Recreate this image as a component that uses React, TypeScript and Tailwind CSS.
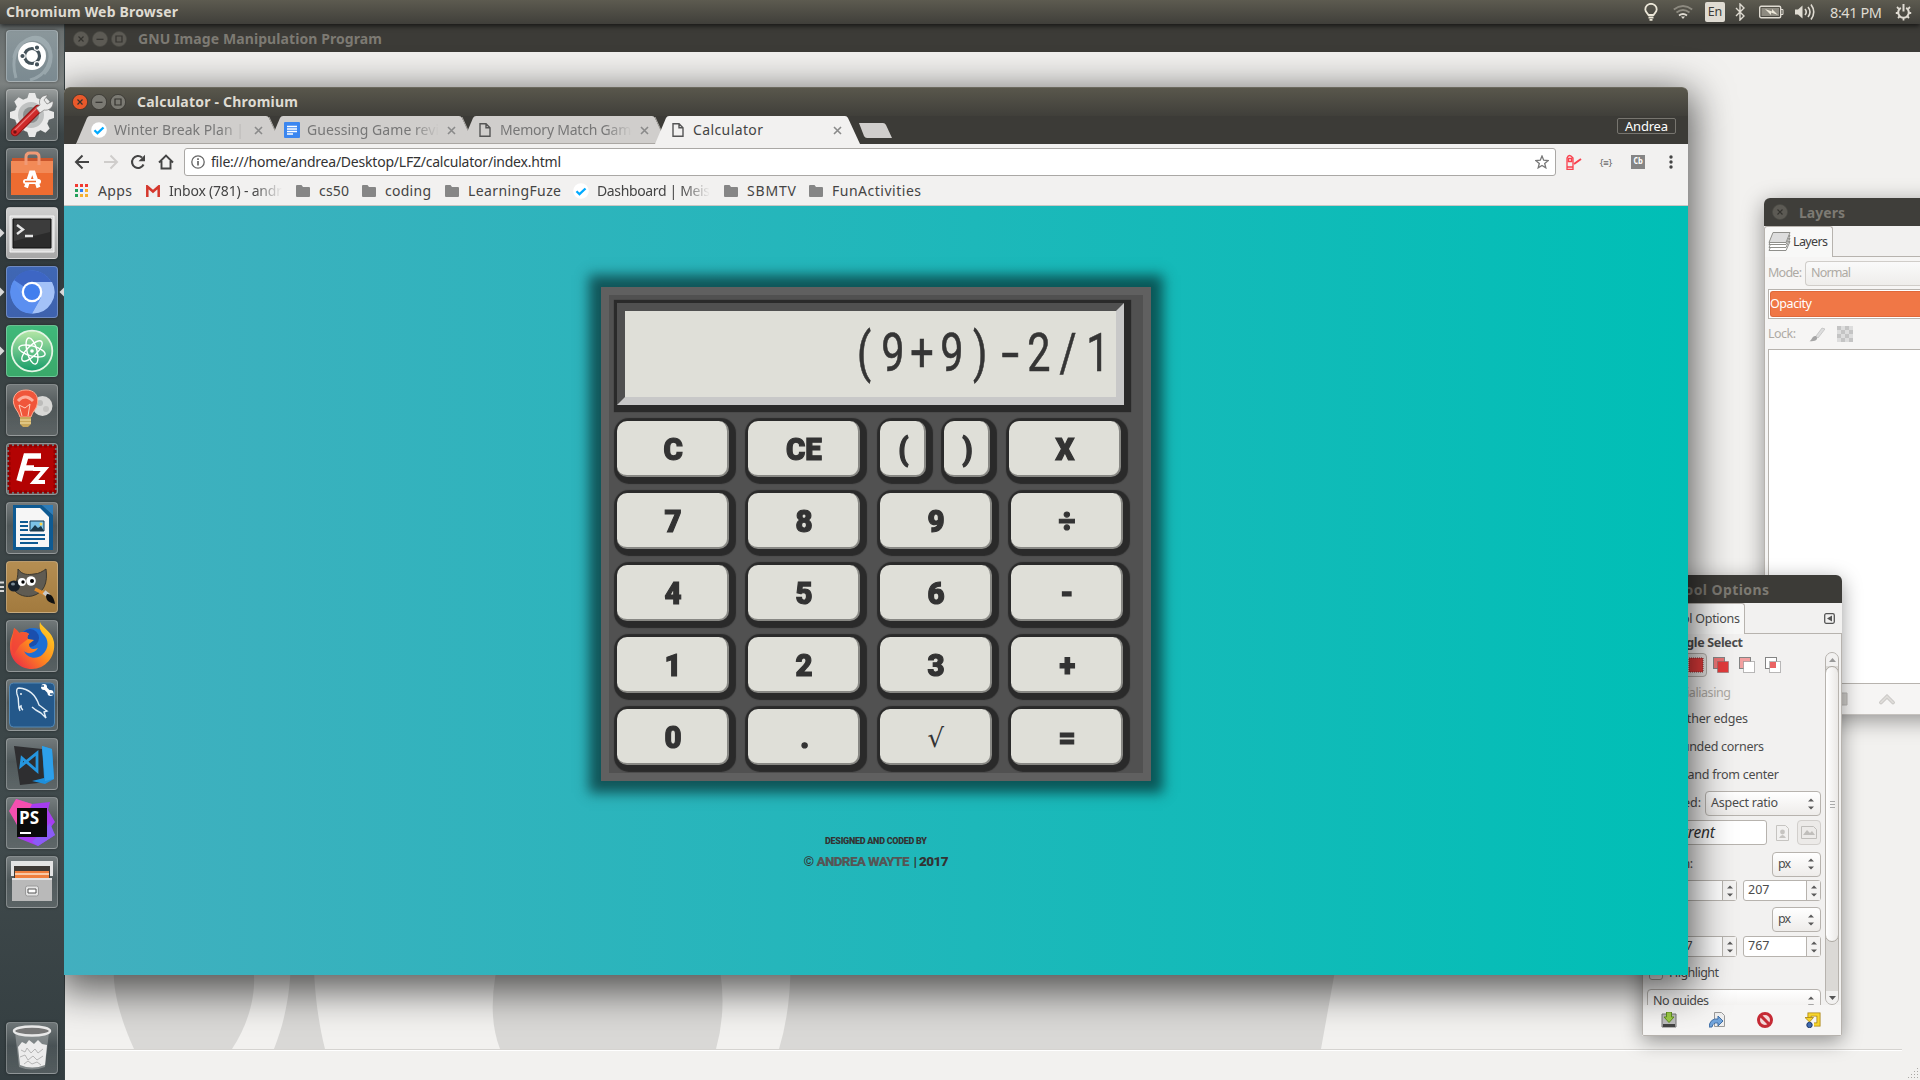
import React, { useLayoutEffect, useRef } from "react";

/* Single-line label whose tracking is adjusted so it fills the width of its box. */
function Fit({ className = "", children }: { className?: string; children: string }) {
  const box = useRef<HTMLSpanElement>(null);
  const text = useRef<HTMLSpanElement>(null);
  useLayoutEffect(() => {
    if (!box.current || !text.current) return;
    text.current.style.letterSpacing = "0px";
    const free = box.current.clientWidth - text.current.getBoundingClientRect().width;
    text.current.style.letterSpacing = `${free / Math.max(1, children.length - 1)}px`;
  }, [children]);
  return (
    <span ref={box} className={`inline-block shrink-0 whitespace-nowrap ${className}`}>
      <span ref={text} className="inline-block">{children}</span>
    </span>
  );
}

function WinButton({ kind, active }: { kind: "close" | "min" | "max"; active?: boolean }) {
  const fill = active ? (kind === "close" ? "#e9592b" : "#7b7a73") : "#5c5a54";
  return (
    <svg width="16" height="16" viewBox="0 0 16 16" className="shrink-0">
      <circle cx="8" cy="8" r="7.6" fill={fill} stroke={active ? "#33322e" : "#4b4a45"} strokeWidth=".7" />
      <g stroke="#34332f" strokeWidth="1.2" fill="none">
        {kind === "close" && <path d="M5.5 5.5l5 5M10.5 5.5l-5 5" />}
        {kind === "min" && <path d="M4.5 8.3h7" />}
        {kind === "max" && <path d="M5 5h6v6H5z" />}
      </g>
    </svg>
  );
}

function Tile({ tone, children }: { tone?: string; children: React.ReactNode }) {
  return (
    <div className={`h-[52px] w-[52px] overflow-hidden rounded-[4px] border border-white/25 shadow-[0_0_3px_rgba(0,0,0,.4)] ${tone ?? "bg-[linear-gradient(rgba(255,255,255,.28),rgba(255,255,255,.1)_45%,rgba(255,255,255,.16))]"}`}>
      <svg width="52" height="52" viewBox="0 0 52 52" className="-m-px block">{children}</svg>
    </div>
  );
}

const Dash = () => (
  <Tile tone="bg-linear-to-b from-[#8b979b] to-[#7b8a91]">
    <path d="M10 48C2 20 20 4 34 8c14 6 14 26 4 36M8 28C10 10 30 2 42 18c6 12-2 28-18 32" fill="none" stroke="#b9c5c9" strokeWidth="3" opacity=".45" />
    <circle cx="26" cy="26" r="14" fill="#fff" />
    <circle cx="26" cy="26" r="7.500" fill="none" stroke="#44525a" strokeWidth="3.200" />
    <g fill="#44525a" stroke="#fff" strokeWidth="1.200"><circle cx="16.500" cy="26" r="2.700" /><circle cx="31" cy="17.600" r="2.700" /><circle cx="31" cy="34.400" r="2.700" /></g>
  </Tile>
);
const Settings = () => (
  <Tile>
    <g fill="#e9e9e9">
      <circle cx="26" cy="26" r="17.500" />
      {[0, 45, 90, 135, 180, 225, 270, 315].map((a) => <path key={a} d="M21 10l2-6h6l2 6z" transform={`rotate(${a} 26 26)`} />)}
    </g>
    <circle cx="25" cy="26" r="13" fill="#bfc1c1" /><circle cx="25" cy="26" r="8" fill="#8c9090" />
    <path d="M9 43L32 20" stroke="#8e1414" strokeWidth="8.500" strokeLinecap="round" />
    <path d="M9 43L32 20" stroke="#cf2a2a" strokeWidth="6.500" strokeLinecap="round" />
    <path d="M9 41L31 19" stroke="#ea7a7a" strokeWidth="1.200" strokeLinecap="round" />
    <path d="M30 19l4-3c-2-6 2-10 8-10l-4 5 3 4 6-3c1 6-4 10-9 9l-4 3z" fill="#eaeaea" stroke="#777" strokeWidth=".7" />
    <circle cx="9" cy="43" r="1.700" fill="#6e1010" />
  </Tile>
);
const Software = () => (
  <Tile>
    <path d="M6 10h41v5H6z" fill="#c8552c" /><path d="M5 13h42v34H5z" fill="#ee6c31" /><path d="M5 13h42v12H5z" fill="#f28a57" />
    <path d="M20 17V9q0-4 4-4h5q4 0 4 4v8" fill="none" stroke="#f09a76" strokeWidth="3" />
    <path d="M20 39.500L25 24.500h2.500L32.500 39.500" fill="none" stroke="#fff" strokeWidth="4" />
    <rect x="17" y="31" width="18" height="5" rx="2.500" fill="#fff" /><path d="M19 33.500h11" stroke="#ee6c31" strokeWidth="1.400" />
  </Tile>
);
const Terminal = () => (
  <Tile tone="bg-linear-to-b from-[#cfcfcf] to-[#a7a7a7]">
    <path d="M4 9h44v36H4z" fill="#d9d9d9" stroke="#f5f5f5" /><path d="M7 12h38v29H7z" fill="#2b2b2b" stroke="#111" /><path d="M8 13h36v12L8 34z" fill="#444" opacity=".7" />
    <path d="M11 18l6 4.500-6 4.500M19 29h8" fill="none" stroke="#e6e6e6" strokeWidth="2.400" />
  </Tile>
);
const ChromiumIcon = () => (
  <Tile tone="bg-linear-to-b from-[#3f67b4] to-[#3e62ad]">
    <circle cx="26" cy="26" r="21.500" fill="#5f92ee" />
    <path d="M26 26L8 14A21.500 21.500 0 0 1 45.500 17z" fill="#3d66c4" /><path d="M26 16h20a21.500 21.500 0 0 1-20 31.500l9-16z" fill="#a3c2f8" /><path d="M7.400 15A21.500 21.500 0 0 0 26 47.500l8-14-17-3z" fill="#5b8ff0" />
    <circle cx="26" cy="26" r="10.300" fill="#fff" /><circle cx="26" cy="26" r="8" fill="#427fee" />
  </Tile>
);
const Atom = () => (
  <Tile tone="bg-linear-to-b from-[#3fb97a] to-[#3aa96a]">
    <defs><linearGradient id="atom" x1="0" y1="0" x2="0" y2="1"><stop offset="0" stopColor="#b5e7a6" /><stop offset="1" stopColor="#169c69" /></linearGradient></defs>
    <circle cx="26" cy="26" r="20.300" fill="url(#atom)" stroke="#e3f5e4" strokeWidth="1.800" />
    <g fill="none" stroke="#fff" strokeWidth="1.400">{[15, 75, 135].map((a) => <ellipse key={a} cx="26" cy="26" rx="13.500" ry="5" transform={`rotate(${a} 26 26)`} />)}</g>
    <circle cx="26" cy="26" r="1.800" fill="#fff" />
  </Tile>
);
const Bulb = () => (
  <Tile>
    <circle cx="36.500" cy="22" r="10" fill="#d8d8d6" /><circle cx="34" cy="19" r="3" fill="#bcbcba" /><circle cx="40" cy="25" r="3" fill="#c4c4c2" />
    <path d="M20 6C11 6 6.500 12 7.500 19c1 6 5 8 6.500 14h11c1.500-6 6-8 6.500-14C32.500 11 28 6 20 6z" fill="#f0563b" stroke="#ffab91" />
    <path d="M12 17q7-8 15 0" stroke="#ffc6b6" strokeWidth="3" fill="none" opacity=".8" /><path d="M16 32l-3-11 6 3 5-4-2 12" stroke="#ffd0bd" fill="none" strokeWidth="1" />
    <path d="M14 33h11v7l-3 3h-5l-3-3z" fill="#c9a85c" /><path d="M14 36h11M14 39h11" stroke="#f4e2a8" strokeWidth="1" />
  </Tile>
);
const FileZilla = () => (
  <Tile tone="bg-[#b4b4b4]/40">
    <rect x="3" y="3" width="46" height="46" fill="#b30303" stroke="#8f0000" strokeWidth="3" strokeDasharray="3 2" />
    <g fill="none" stroke="#fff"><path d="M13 38L20 13h15M16 25h12" strokeWidth="5.500" /><path d="M27 26h12L28 39h11" strokeWidth="4" /></g>
  </Tile>
);
const Writer = () => (
  <Tile>
    <path d="M7 3h29l11 10v35H7z" fill="#0e5a92" /><path d="M36 3l11 10V3z" fill="#2c7dba" /><path d="M10 6h24l9 9v30H10z" fill="#f6f6f6" />
    <path d="M14 20h8M14 24h8M14 28h8M14 33h25M14 37h25M14 41h18" stroke="#0e5a92" strokeWidth="1.800" /><path d="M24 19h14v10H24z" fill="#7cc3e6" stroke="#123d58" /><path d="M24 29l5-6 3 3 3-2 3 5z" fill="#1b3a4b" /><circle cx="35" cy="22" r="1.500" fill="#ffd54a" />
  </Tile>
);
const Gimp = () => (
  <Tile tone="bg-linear-to-b from-[#b58e52] to-[#a27a3e]">
    <path d="M12 8c4 6 10 6 16 5 5 0 9-3 12-5 2 14-2 24-14 27-9 2-17-3-20-9 5-3 6-10 6-18z" fill="#5f5b52" stroke="#3c382f" />
    <ellipse cx="8" cy="25" rx="6" ry="5.500" fill="#17202a" /><ellipse cx="7" cy="23" rx="2" ry="1.500" fill="#7a8a96" />
    <circle cx="16" cy="21" r="4" fill="#fff" /><circle cx="25" cy="20" r="4.800" fill="#fff" /><circle cx="17" cy="21" r="1.700" /><circle cx="26" cy="20" r="2" />
    <path d="M29 28l12 6" stroke="#e08c2c" strokeWidth="3.500" /><path d="M38 31l5 4" stroke="#c9c9c9" strokeWidth="4.500" /><path d="M41 33c5 0 7 4 8 10-5-1-9-3-9-8z" fill="#111" />
  </Tile>
);
const Firefox = () => (
  <Tile>
    <defs><linearGradient id="fox" x1="1" y1="0" x2="0" y2="1"><stop offset="0" stopColor="#ffe226" /><stop offset=".5" stopColor="#ff8a1e" /><stop offset="1" stopColor="#e8194e" /></linearGradient></defs>
    <circle cx="27" cy="24" r="16" fill="#1d6fd6" /><circle cx="24" cy="18" r="9" fill="#1a4fae" />
    <path d="M34 2c2 6 12 9 14 20 2 15-9 27-22 27S3 39 4 25c0-7 3-9 4-17 2 1 4 3 5 5 4-2 8-1 10 1-2 2-2 4-1 5l6 1-5 4c0 5 4 6 9 4-3 5-10 7-14 3 3 7 12 9 18 4 8-7 6-16 2-20-4-4-5-8-4-13z" fill="url(#fox)" />
    <path d="M8 8c2 1 4 3 5 5 4-2 8-1 10 1-2 2-2 4-1 5l-8 6-6 9C3 26 7 18 8 8z" fill="#f0403a" opacity=".75" />
  </Tile>
);
const Workbench = () => (
  <Tile>
    <rect x="3.500" y="4" width="45" height="44" rx="4" fill="#24588a" stroke="#5387b3" />
    <path d="M17 31c-2-1-2-2-2-4-2 1-2 3-1 5-3-6 0-11-3-17-1-4 0-6 2-6 12 1 17 8 20 17 3 2 5 4 8 6l-3 1 2 6-5-5c-4-2-7-4-9-6" fill="none" stroke="#e3eef6" strokeWidth="1.400" /><circle cx="15" cy="15" r=".9" fill="#fff" />
    <path d="M38 8l6 6" stroke="#fff" strokeWidth="3.200" /><circle cx="38" cy="8" r="3" fill="#fff" /><circle cx="44.500" cy="14" r="3" fill="#fff" /><path d="M35 7h3M47 15h-3" stroke="#24588a" strokeWidth="1.500" />
  </Tile>
);
const VSCode = () => (
  <Tile>
    <path d="M8 8l28 3 5 33-27 3z" fill="#2e2e30" /><path d="M36 8l10 3 2 30-9 5-13-3 12-3z" fill="#1d8fdc" /><path d="M36 8l10 3 2 30-9 2z" fill="#2da0ea" />
    <path d="M31 15v18L16 20l-1 8 16-13z" fill="none" stroke="#2596df" strokeWidth="2.800" />
  </Tile>
);
const PhpStorm = () => (
  <Tile>
    <path d="M10 2l16 5 18-2-2 8 7 12-5 6 5 7-17 11-20-8 2-6-6-14z" fill="#a63df0" /><path d="M10 2l16 5-12 26L3 14z" fill="#f54fb0" /><path d="M44 26l5 12-17 11-6-4z" fill="#8a5cf6" />
    <path d="M11 11h30v29H11z" fill="#0a0a0a" /><path d="M14 36h11" stroke="#fff" strokeWidth="2" />
    <text x="13" y="27" fill="#fff" fontSize="17" fontWeight="700" fontFamily="Open Sans, sans-serif">PS</text>
  </Tile>
);
const Files = () => (
  <Tile>
    <path d="M5 5h42v15H5z" fill="#e4e4e4" /><path d="M8 10h36v12H8z" fill="#3e3a36" /><path d="M9 15h34v8H9z" fill="#ef7f3d" /><path d="M9 18h34" stroke="#fbe0c8" strokeWidth="1.300" />
    <path d="M6 22h40v23H6z" fill="#b9b9b9" /><path d="M6 22h40v2H6z" fill="#e2e2e2" /><rect x="19.500" y="30" width="13" height="10" rx="2" fill="#e4e4e4" stroke="#999" /><path d="M22 33h8v4h-8z" fill="#fff" stroke="#555" />
  </Tile>
);
const Trash = () => (
  <Tile>
    <path d="M9 10l4 35q13 5 26 0l4-35z" fill="#c8caca" opacity=".4" /><ellipse cx="26" cy="9" rx="18" ry="4.500" fill="#777" stroke="#e8e8e8" strokeWidth="2.500" />
    <path d="M12 25l4-5 4 2 3-4 5 4 4-4 4 4 5 1-2 20q-13 5-25 0z" fill="#ececec" /><path d="M15 28l4 2 2-4 4 5 4-4 3 4 5-4M14 35l5-2 3 5 5-4 4 4 6-4M18 42l4-3 4 3 5-2 4 3" stroke="#b5b5b5" strokeWidth="1" fill="none" />
  </Tile>
);

const launcher: { icon: React.ReactNode; left?: boolean; right?: boolean; pips?: boolean }[] = [
  { icon: <Dash /> }, { icon: <Settings /> }, { icon: <Software /> }, { icon: <Terminal />, left: true },
  { icon: <ChromiumIcon />, left: true, right: true }, { icon: <Atom />, left: true }, { icon: <Bulb /> }, { icon: <FileZilla /> },
  { icon: <Writer /> }, { icon: <Gimp />, pips: true }, { icon: <Firefox /> }, { icon: <Workbench /> }, { icon: <VSCode /> },
  { icon: <PhpStorm /> }, { icon: <Files /> },
];

function Launcher() {
  return (
    <aside className="absolute top-[24px] left-0 flex h-[1056px] w-[64px] flex-col bg-[linear-gradient(#666c6c_0,#7c8180_60px,#5b6263_78px,#3b4446_110px,#30393c_220px,#384143_330px,#3f4748_420px,#394345_650px,#414b4d_800px,#333d40_1056px)] pt-[6px]">
      {launcher.map((item, i) => (
        <div key={i} className="flex h-[59px] items-start">
          <svg width="6" height="52" className="shrink-0">
            {item.left && <path d="M0 21.500l4.500 4.500L0 30.500z" fill="#d8d8d8" />}
            {item.pips && <path d="M0 21.500h4M0 26h4M0 30h4" stroke="#d8d8d8" strokeWidth="2.200" />}
          </svg>
          {item.icon}
          <svg width="6" height="52" className="shrink-0">{item.right && <path d="M6 21.500L1.500 26 6 30.500z" fill="#d8d8d8" />}</svg>
        </div>
      ))}
      <div className="mt-auto mb-[6px] pl-[6px]"><Trash /></div>
    </aside>
  );
}

function TopBar() {
  return (
    <header className="absolute inset-x-0 top-0 flex h-[24px] items-center bg-linear-to-b from-[#5d5b50] to-[#403f3a] pl-[6px] text-[#dfdbd2] shadow-[0_2px_5px_rgba(0,0,0,.65)]">
      <Fit className="w-[172px] text-[14px] leading-none font-bold">Chromium Web Browser</Fit>
      <div className="ml-auto flex h-[24px] items-center">
        <svg width="16" height="18" viewBox="0 0 16 18" fill="none" stroke="#ece7d8" strokeWidth="1.800"><path d="M5.500 12C4.500 10 2.300 9 2.300 6.500a5.700 5.700 0 0 1 11.400 0C13.700 9 11.500 10 10.500 12zM5.500 14.500h5M6.500 16.800h3" /></svg>
        <svg className="ml-[14px]" width="20" height="16" viewBox="0 0 20 16" fill="none" strokeWidth="1.800"><path d="M.8 5.500Q10-1.500 19.200 5.500" stroke="#8d8a80" /><path d="M3.500 8.500q6.500-5 13 0" stroke="#8d8a80" /><path d="M6 11.500q4-3 8 0" stroke="#dfdbd2" /><path d="M8 12.500h4l-2 2.500z" fill="#dfdbd2" /></svg>
        <span className="ml-[12px] flex h-[20px] w-[20px] items-center justify-center rounded-[2px] bg-[#dfdbd2] text-[12.500px] text-[#3c3b37]">En</span>
        <svg className="ml-[10px]" width="10" height="18" viewBox="0 0 10 18" fill="none" stroke="#dfdbd2" strokeWidth="1.400"><path d="M1 5l8 8-4 4V1l4 4-8 8" /></svg>
        <svg className="ml-[14px]" width="25" height="14" viewBox="0 0 25 14" fill="none" stroke="#dfdbd2"><rect x=".7" y="1.200" width="21" height="11.600" rx="1.500" strokeWidth="1.400" /><path d="M22 4.500h2v5h-2" /><rect x="2.500" y="3" width="17.500" height="8" fill="#8d8a80" stroke="none" /><path d="M6 4l7 2.500V4l6 6-7-2.500V10z" fill="#ece7d8" stroke="none" /></svg>
        <svg className="ml-[10px]" width="21" height="18" viewBox="0 0 21 18" fill="none" stroke="#dfdbd2" strokeWidth="1.600"><path d="M1 6.500h3l4.500-4v13L4 11.500H1z" fill="#dfdbd2" stroke="none" /><path d="M11 6q2.500 3 0 6M14 4q4 5 0 10M17 1.500q5.500 7.500 0 15" /></svg>
        <Fit className="ml-[15px] w-[52px] text-[14.500px] leading-none">8:41 PM</Fit>
        <svg className="mr-[8px] ml-[13px]" width="17" height="17" viewBox="0 0 17 17" fill="none" stroke="#dfdbd2"><path d="M5.800 3.800a5.300 5.300 0 1 0 5.400 0" strokeWidth="2" /><path d="M8.500 0v7.500" strokeWidth="2" /><path d="M3.800 4.800L2 3M3.200 9H.8M4.500 12.500L3 14M8.500 14v2.500M12.500 12.500L14 14M13.800 9h2.400M13.200 4.800L15 3" strokeWidth="1.800" /></svg>
      </div>
    </header>
  );
}

function GimpMain() {
  return (
    <section className="absolute top-[24px] left-[65px] flex h-[1056px] w-[1855px] flex-col bg-[#f2f1ef]">
      <div className="flex h-[28px] shrink-0 items-center bg-[#3c3b37] pt-[2px] pl-[8px] text-[#7d7a73]">
        <div className="flex gap-[3px]"><WinButton kind="close" /><WinButton kind="min" /><WinButton kind="max" /></div>
        <Fit className="ml-[11px] w-[244px] text-[14px] leading-none font-bold">GNU Image Manipulation Program</Fit>
      </div>
      <svg className="mt-auto shrink-0" width="1855" height="106" viewBox="65 943 1855 106" fill="#d9d8d6">
        <path d="M134 1049C105 985 112 950 125 943h118c15 15 18 62-11 106z" /><path d="M291 943c1 50-7 80-17 106h51c-10-40-12-80-11-106z" />
        <path d="M503 943q-19 65-3 106h216q14-50-2-106z" /><path d="M790 943q3 60-11 106h542l19-106z" />
      </svg>
      <div className="flex h-[31px] shrink-0 flex-col">
        <div className="mr-[18px] h-[2px] border-t border-[#d5d3d0] bg-white" />
        <svg className="mt-auto ml-auto" width="12" height="12" fill="#aaa8a4"><path d="M9 0h1v1H9zM6 3h1v1H6zM9 3h1v1H9zM3 6h1v1H3zM6 6h1v1H6zM9 6h1v1H9zM0 9h1v1H0zM3 9h1v1H3zM6 9h1v1H6zM9 9h1v1H9z" /></svg>
      </div>
    </section>
  );
}

function LayersWindow() {
  return (
    <section className="absolute top-[198px] left-[1764px] flex h-[517px] w-[156px] flex-col overflow-hidden rounded-tl-[6px] bg-[#f6f5f4] text-[12.500px] text-[#aeaaa4]">
      <div className="flex h-[28px] shrink-0 items-center bg-[#3f3e3a] pl-[8px] text-[#7d7a73]"><WinButton kind="close" /><Fit className="ml-[11px] w-[46px] pt-px text-[14px] leading-none font-bold">Layers</Fit></div>
      <div className="flex h-[31px] shrink-0 bg-[#f2f1f0] text-[#3f3f3f]">
        <div className="flex w-[69px] items-center rounded-t-[3px] border border-b-0 border-[#b7b3ae] bg-[#f8f8f7] pl-[3px]">
          <svg width="23" height="20" viewBox="0 0 23 20" stroke="#8f8f8b" fill="#fff"><path d="M1 18.500h17l4-9H5z" /><path d="M1 15.500h17l4-9H5z" /><path d="M1 12.500h17l4-9H5z" /><path d="M1 10.500h17l4-10H5z" fill="#ddd" /></svg>
          <Fit className="ml-[2px] w-[35px] leading-none">Layers</Fit>
        </div>
        <div className="flex-1 border-b border-[#b7b3ae]" />
      </div>
      <div className="flex min-h-0 flex-1 flex-col border-l border-[#b7b3ae] pl-[3px]">
        <div className="mt-[4px] flex h-[25px] shrink-0 items-center"><Fit className="w-[34px] leading-none">Mode:</Fit><div className="ml-[3px] flex h-[25px] flex-1 items-center rounded-l-[4px] border border-r-0 border-[#d0cdc9] bg-linear-to-b from-[#fafafa] to-[#eeedeb] pl-[5px]"><Fit className="w-[40px] leading-none">Normal</Fit></div></div>
        <div className="mt-[3px] flex h-[30px] shrink-0 border border-r-0 border-[#b7b3ae] bg-white p-px pr-0"><div className="flex flex-1 items-center rounded-l-[3px] border border-r-0 border-[#e0683a] bg-[#f07746] text-white"><Fit className="-ml-px w-[42px] leading-none">Opacity</Fit></div></div>
        <div className="flex h-[30px] shrink-0 items-center"><Fit className="w-[28px] leading-none">Lock:</Fit>
          <svg className="ml-[13px]" width="16" height="15" viewBox="0 0 16 15"><path d="M0 14c3 0 3-6 7-5 3 3 0 6-7 5z" fill="#a5a5a5" /><path d="M7 9l6-8 3 1-7 9z" fill="#ddd" stroke="#bbb" strokeWidth=".7" /></svg>
          <svg className="ml-[12px]" width="16" height="16"><rect width="16" height="16" fill="#ddd" /><path d="M0 0h4v4H0zM8 0h4v4H8zM4 4h4v4H4zM12 4h4v4h-4zM0 8h4v4H0zM8 8h4v4H8zM4 12h4v4H4zM12 12h4v4h-4z" fill="#c4c4c4" /></svg>
        </div>
        <div className="flex-1 border border-r-0 border-[#b7b3ae] bg-white" />
        <div className="flex h-[31px] shrink-0 items-center border-b border-[#c5c2be]">
          <svg className="ml-[62px]" width="18" height="14"><path d="M2 3h9l1-2h5v12H2z" fill="#cfcdca" stroke="#bab8b5" /></svg>
          <svg className="ml-[31px]" width="16" height="12" fill="none"><path d="M2 9.500l6-6 6 6" stroke="#c5c3c0" strokeWidth="3.600" strokeLinecap="round" /><path d="M2 9.500l6-6 6 6" stroke="#dddbd8" strokeWidth="2" strokeLinecap="round" /></svg>
        </div>
      </div>
    </section>
  );
}

const Arrows = () => (
  <svg width="8" height="12" viewBox="0 0 8 12" fill="#5a5a5a" className="shrink-0"><path d="M1 3.500L4 .5l3 3zM1 8.500l3 3 3-3z" /></svg>
);
const Combo = ({ width, text, children }: { width: string; text: string; children: string }) => (
  <div className={`flex h-[25px] items-center justify-between rounded-[4px] border border-[#b7b3ae] bg-linear-to-b from-white to-[#eeecea] pr-[5px] pl-[5px] ${width}`}><Fit className={`${text} leading-none`}>{children}</Fit><Arrows /></div>
);
const Spin = ({ children }: { children: string }) => (
  <div className="flex h-[21px] w-[78px] rounded-[3px] border border-[#b7b3ae] bg-white"><span className="flex-1 self-center px-[4px] leading-none">{children}</span><span className="flex w-[14px] items-center justify-center border-l border-[#b7b3ae] bg-[#f4f3f2]"><Arrows /></span></div>
);
function ModeIcon({ kind }: { kind: "replace" | "add" | "sub" | "cross" }) {
  return (
    <svg width="16" height="16" viewBox="0 0 16 16" fill="none">
      {kind === "replace" && <rect x="1" y="1" width="14" height="14" fill="#e33b3b" stroke="#8a3030" strokeDasharray="1 1" />}
      {kind !== "replace" && <rect x=".5" y=".5" width="11" height="11" fill={kind === "cross" ? "#fff" : kind === "add" ? "#ea7474" : "#f2a0a0"} stroke="#848484" />}
      {kind !== "replace" && <rect x="4.500" y="4.500" width="11" height="11" fill={kind === "add" ? "#e33b3b" : "#fff"} stroke="#777" strokeDasharray="1 1" />}
      {kind === "cross" && <rect x="5" y="5" width="6" height="6" fill="#ea6464" />}
    </svg>
  );
}

function ToolOptions() {
  return (
    <section className="absolute top-[575px] left-[1642px] flex h-[461px] w-[200px] flex-col overflow-hidden rounded-t-[6px] bg-[#f2f1f0] text-[12.500px] text-[#4c4c4c] shadow-[0_5px_20px_rgba(0,0,0,.4)]">
      <div className="flex h-[28px] shrink-0 items-center bg-[#3c3b37] pl-[7px] text-[#7d7a73]"><WinButton kind="close" /><Fit className="ml-[12px] w-[92px] pt-px text-[14px] leading-none font-bold">Tool Options</Fit></div>
      <div className="flex h-[31px] shrink-0"><div className="flex w-[103px] items-center justify-end rounded-tr-[3px] border-t border-r border-[#b7b3ae] bg-[#f8f8f7] pr-[4px]"><Fit className="w-[71px] leading-none">Tool Options</Fit></div>
        <div className="flex flex-1 items-center justify-end border-b border-[#b7b3ae] pr-[7px]"><svg width="11" height="11"><rect x=".7" y=".7" width="9.600" height="9.600" rx="1.500" fill="none" stroke="#555" strokeWidth="1.300" /><path d="M8 2.500v6l-5-3z" fill="#555" /></svg></div></div>
      <div className="flex h-[18px] shrink-0 items-center border-r border-[#b7b3ae] pt-px"><Fit className="ml-[3px] w-[98px] leading-none font-bold">Rectangle Select</Fit></div>
      <div className="flex h-[353px] shrink-0 overflow-hidden border-x border-[#b7b3ae]">
        <div className="flex w-[179px] flex-col overflow-hidden pl-[4px]">
          <div className="flex h-[27px] shrink-0 items-center gap-[10px] pb-px pl-[37px]"><span className="-mr-[4px] flex h-[24px] w-[23px] items-center justify-center rounded-[4px] border border-[#b0aca7] bg-[#e4e2e0]"><ModeIcon kind="replace" /></span><ModeIcon kind="add" /><ModeIcon kind="sub" /><ModeIcon kind="cross" /></div>
          <div className="flex h-[27px] shrink-0 items-center pt-px pl-[20px] text-[#aeaaa4]"><Fit className="w-[64px] leading-none">Antialiasing</Fit></div>
          <div className="flex h-[27px] shrink-0 items-center pl-[20px]"><Fit className="w-[81px] leading-none">Feather edges</Fit></div>
          <div className="flex h-[28px] shrink-0 items-center pl-[20px]"><Fit className="w-[97px] leading-none">Rounded corners</Fit></div>
          <div className="flex h-[28px] shrink-0 items-center pl-[20px]"><Fit className="w-[112px] leading-none">Expand from center</Fit></div>
          <div className="flex h-[29px] shrink-0 items-center pl-[20px]"><Fit className="w-[34px] leading-none">Fixed:</Fit><span className="w-[4px]" /><Combo width="w-[116px]" text="w-[67px]">Aspect ratio</Combo></div>
          <div className="flex h-[29px] shrink-0 items-center"><div className="flex h-[25px] w-[120px] items-center rounded-[3px] border border-[#b7b3ae] bg-white pl-[16px] text-[15.500px] text-[#333] italic"><Fit className="w-[51px] leading-none">Current</Fit></div>
            <svg className="ml-[9px]" width="13" height="16" fill="#c6c4c1"><path d="M.5.5h9l3 3v12H.5z" fill="none" stroke="#c6c4c1" /><circle cx="6.500" cy="7" r="2.400" /><path d="M3 13q3.500-6 7 0z" /></svg>
            <span className="ml-[8px] flex h-[25px] w-[24px] items-center justify-center rounded-[4px] border border-[#d2cfcc] bg-[#eceae8]"><svg width="16" height="13" fill="#c0bebb"><path d="M.5.5h12l3 3v9H.5z" fill="none" stroke="#c0bebb" /><path d="M2 9l4-5 3 3 2-2 3 4z" /></svg></span></div>
          <div className="flex h-[33px] shrink-0 items-center justify-between pt-px pr-px"><Fit className="w-[46px] leading-none">Position:</Fit><Combo width="w-[49px]" text="w-[13px]">px</Combo></div>
          <div className="-ml-[13px] flex h-[22px] shrink-0 justify-end gap-[6px] pr-px"><Spin>287</Spin><Spin>207</Spin></div>
          <div className="flex h-[34px] shrink-0 items-center justify-between pt-px pr-px"><Fit className="w-[26px] leading-none">Size:</Fit><Combo width="w-[49px]" text="w-[13px]">px</Combo></div>
          <div className="flex h-[22px] shrink-0 justify-end gap-[6px] pr-px"><Spin>1077</Spin><Spin>767</Spin></div>
          <div className="flex h-[29px] shrink-0 items-center pt-px"><span className="ml-[2px] h-[14px] w-[14px] rounded-[3px] border border-[#aaa6a0] bg-[#f8f8f7]" /><Fit className="ml-[6px] w-[50px] leading-none">Highlight</Fit></div>
          <div className="mt-[2px] shrink-0"><Combo width="w-[174px]" text="w-[56px]">No guides</Combo></div>
        </div>
        <div className="ml-[3px] flex w-[14px] flex-col overflow-hidden rounded-[7px] border border-[#b7b3ae] bg-[#dbd9d6]">
          <div className="flex h-[13px] items-center justify-center bg-[#f2f1f0]"><svg width="7" height="4" fill="#999"><path d="M0 4l3.500-4L7 4z" /></svg></div>
          <div className="-mx-px flex h-[276px] shrink-0 flex-col items-center justify-center gap-[2px] rounded-[7px] border border-[#aca8a2] bg-linear-to-r from-white to-[#eae8e6]"><i className="h-px w-[5px] bg-[#aaa]" /><i className="h-px w-[5px] bg-[#aaa]" /><i className="h-px w-[5px] bg-[#aaa]" /></div>
          <div className="mt-auto flex h-[13px] items-center justify-center bg-[#f2f1f0]"><svg width="7" height="4" fill="#555"><path d="M0 0l3.500 4L7 0z" /></svg></div>
        </div>
      </div>
      <div className="flex flex-1 items-center gap-[32px] rounded-b-[2px] border border-t-0 border-[#b7b3ae] bg-[#f6f5f4] pl-[18px]">
        <svg width="16" height="16"><path d="M1 2h14v13H1z" fill="#bbb" stroke="#777" /><path d="M2 12h12v3H2z" fill="#444" /><path d="M5.500 0h5v5H13L8 10.500 3 5h2.500z" fill="#9ccb46" stroke="#5e8d1f" /></svg>
        <svg width="16" height="16"><path d="M5.500.5h7l3 3v11h-10z" fill="#eee" stroke="#999" /><path d="M0 15q1-9 9-8V4l5 5-5 5v-3q-5-1-6 4z" fill="#72a5dc" stroke="#3f6ea6" /></svg>
        <svg width="16" height="16"><circle cx="8" cy="8" r="6.500" fill="#f3dada" stroke="#c52a34" strokeWidth="3" /><path d="M4 4l8 8" stroke="#c52a34" strokeWidth="3" /></svg>
        <svg width="16" height="16" fill="none"><path d="M4.500 7V2.500h9v10H9" stroke="#a98208" strokeWidth="4" /><path d="M4.500 7V2.500h9v10H9" stroke="#f6d42d" strokeWidth="2.400" /><path d="M0 5.500h8.500L4.500 10z" fill="#f6d42d" stroke="#a98208" strokeWidth=".8" /><circle cx="4.500" cy="13" r="2.700" fill="#3f6bb0" stroke="#1f3a6c" /></svg>
      </div>
    </section>
  );
}

const FileIcon = () => <svg width="12" height="14" viewBox="0 0 12 14" fill="none" stroke="#555" strokeWidth="1.400" className="shrink-0"><path d="M1 .8h6l4 4v8.400H1zM7 .8v4h4" /></svg>;
const CheckIcon = () => <svg width="16" height="16" className="shrink-0"><circle cx="8" cy="8" r="7.800" fill="#fff" /><path d="M3.500 8.200l3 3 6-5.700" fill="none" stroke="#00aaff" strokeWidth="2.300" /></svg>;
const DocIcon = () => <svg width="16" height="16" className="shrink-0"><rect width="16" height="16" rx="1" fill="#3b86f0" /><path d="M3 4.500h10M3 7h10M3 9.500h10M3 12h6" stroke="#fff" strokeWidth="1.300" /></svg>;

function Tab({ icon, active, fade, title, first }: { icon: React.ReactNode; active?: boolean; fade?: boolean; title: React.ReactNode; first?: boolean }) {
  return (
    <div className={`relative h-[28px] w-[205px] shrink-0 ${first ? "" : "-ml-[12px]"} ${active ? "z-10 text-[#444]" : "text-[#777]"}`}>
      <svg className="absolute inset-0" width="205" height="28"><path d="M0 28L11 2Q12 0 14 0H190Q192 0 193 2L205 28z" fill={active ? "#f2f1f0" : "#d0cecc"} />{!active && <path d="M0 27.500H205L193 1" fill="none" stroke="#aaa7a3" />}</svg>
      <div className="relative flex h-[28px] items-center pl-[15px]">
        <span className="flex w-[16px] justify-center">{icon}</span>
        <span className={`mb-[2px] ml-[7px] flex w-[132px] overflow-hidden ${fade ? "mask-r-from-80%" : ""}`}>{title}</span>
        <svg className="ml-[8px]" width="9" height="9" stroke="#8a8a8a" strokeWidth="1.600"><path d="M1 1l7 7M8 1L1 8" /></svg>
      </div>
    </div>
  );
}

const Folder = () => <svg width="14" height="12" className="shrink-0" fill="#868686"><path d="M1 0h4.500L7 2h6q1 0 1 1v8q0 1-1 1H1q-1 0-1-1V1q0-1 1-1z" /></svg>;

const keyFace = "flex h-[56px] items-center justify-center rounded-[10px] border-r-2 border-b-2 border-[#888884] bg-[#dfdfd8] pt-[3px] pl-[2px] font-['Roboto'] text-[31px] leading-none font-black text-[#333] shadow-[2px_2px_1px_5px_#2a2a2a]";
function Key({ label, width = "w-[112px]" }: { label: string; width?: string }) {
  return (
    <button className={`${keyFace} ${width}`}>
      {label === "√" ? <span className="font-['DejaVu_Sans'] text-[26px] font-normal">√</span> : <span className="scale-x-95 [-webkit-text-stroke:1.2px_#333]">{label}</span>}
    </button>
  );
}

function Calculator() {
  const rows = [["7", "8", "9", "÷"], ["4", "5", "6", "-"], ["1", "2", "3", "+"], ["0", ".", "√", "="]];
  return (
    <div className="h-[494px] w-[550px] border-8 border-[#606060] bg-[#515151] pt-[8px] pl-[8px] shadow-[0_0_12px_12px_rgba(5,40,42,.68)]">
      <div className="flex h-[102px] w-[507px] justify-end border-8 border-t-[#505050] border-r-[#c8c8c8] border-b-[#c8c8c8] border-l-[#505050] bg-[#dfdfd8] pr-[4px] font-['Roboto'] text-[53px] leading-[84px] text-[#353535] shadow-[2px_2px_1px_5px_#2a2a2a]">
        {"(9+9)-2/1".split("").map((c, i) => (
          <span key={i} className="flex w-[29.2px] justify-center"><span className={`[-webkit-text-stroke:.6px_#353535] ${c === "-" ? "scale-x-120" : "scale-x-78"}`}>{c}</span></span>
        ))}
      </div>
      <div className="mt-[16px] flex"><Key label="C" /><span className="w-[19px]" /><Key label="CE" /><span className="w-[20px]" /><Key label="(" width="w-[46px]" /><span className="w-[18px]" /><Key label=")" width="w-[46px]" /><span className="w-[19px]" /><Key label="X" /></div>
      {rows.map((r, i) => (
        <div key={i} className="mt-[16px] flex gap-[19.400px]">{r.map((k) => <Key key={k} label={k} />)}</div>
      ))}
    </div>
  );
}

function Chromium() {
  return (
    <section className="absolute top-[87px] left-[64px] flex h-[888px] w-[1624px] flex-col rounded-t-[6px] bg-[#f2f1f0] text-[14px] text-[#444] shadow-[0_10px_38px_6px_rgba(0,0,0,.62)]">
      <div className="flex h-[29px] shrink-0 items-center rounded-t-[6px] border-t border-[#6b695e] bg-linear-to-b from-[#59574c] to-[#403f3a] pl-[8px] text-[#dfdbd2]">
        <div className="flex gap-[3px]"><WinButton kind="close" active /><WinButton kind="min" active /><WinButton kind="max" active /></div>
        <Fit className="ml-[11px] w-[161px] text-[14px] leading-none font-bold">Calculator - Chromium</Fit>
      </div>
      <div className="flex h-[28px] shrink-0 bg-[#3c3b37] pl-[12px]">
        <Tab first icon={<CheckIcon />} fade title={<Fit className="w-[130px]">Winter Break Plan |</Fit>} />
        <Tab icon={<DocIcon />} fade title={<Fit className="w-[132px]">Guessing Game revi</Fit>} />
        <Tab icon={<FileIcon />} fade title={<Fit className="w-[139px]">Memory Match Game</Fit>} />
        <Tab icon={<FileIcon />} active title={<Fit className="w-[70px]">Calculator</Fit>} />
        <svg className="-ml-[2px] mt-[7px]" width="34" height="16"><path d="M1 0h24q2 0 3 2l6 13H9q-2 0-3-2z" fill="#d0cecc" /></svg>
        <div className="mt-[2px] mr-[12px] ml-auto flex h-[16px] w-[59px] items-center justify-center rounded-[2px] border border-[#77756f] text-white"><Fit className="w-[43px] text-[13px] leading-none">Andrea</Fit></div>
      </div>
      <div className="flex h-[36px] shrink-0 items-center pl-[10px]">
        <svg className="shrink-0" width="16" height="16" fill="none" stroke="#444" strokeWidth="2"><path d="M15 8H2M8.500 1.500L2 8l6.500 6.500" /></svg>
        <svg className="ml-[13px] shrink-0" width="16" height="16" fill="none" stroke="#cfcdcb" strokeWidth="2"><path d="M1 8h13M7.500 1.500L14 8l-6.500 6.500" /></svg>
        <svg className="ml-[11px] shrink-0" width="16" height="16" fill="none" stroke="#444" strokeWidth="2.100"><path d="M13.500 10.500A6 6 0 1 1 12 3.500" /><path d="M15 .8v6.500H8.500z" fill="#444" stroke="none" /></svg>
        <svg className="ml-[12px] shrink-0" width="16" height="16" fill="none" stroke="#444" strokeWidth="1.900"><path d="M1 8.500l7-7 7 7M3.500 7v7.500h9V7" /></svg>
        <div className="ml-[10px] flex h-[28px] w-[1372px] items-center rounded-[3px] border border-[#aaa8a5] bg-white pl-[6px] text-[#333]">
          <svg width="14" height="14" fill="none" stroke="#666" strokeWidth="1.300"><circle cx="7" cy="7" r="6.200" /><path d="M7 6v4.500M7 3.300v1.600" strokeWidth="1.700" /></svg>
          <Fit className="mb-px ml-[6px] w-[350px]">file:///home/andrea/Desktop/LFZ/calculator/index.html</Fit>
          <svg className="mr-[6px] ml-auto" width="14" height="14" fill="none" stroke="#777" strokeWidth="1.300"><path d="M7 1l1.700 4.200 4.500.3-3.500 2.900 1.100 4.400L7 10.400l-3.800 2.400 1.100-4.400L.8 5.500l4.500-.3z" /></svg>
        </div>
        <svg className="ml-[9px]" width="17" height="16" fill="none" stroke="#f9404d"><path d="M2 15.500V4q2-5 6 0v11.500zM3.500 4.500h3v3h-3zM2 13h6" strokeWidth="1.300" /><path d="M9 10l7-5" strokeWidth="2" /></svg>
        <span className="mt-[2px] ml-[16px] w-[15px] text-center font-['DejaVu_Sans_Mono'] text-[9px] leading-none tracking-[-1px] text-[#666]">{"{≡}"}</span>
        <span className="ml-[18px] flex h-[14px] w-[14px] items-center justify-center bg-[#858585] font-['DejaVu_Sans_Mono'] text-[8px] font-bold text-white">Cb</span>
        <svg className="ml-[24px]" width="4" height="14" fill="#444"><circle cx="2" cy="2" r="1.700" /><circle cx="2" cy="7" r="1.700" /><circle cx="2" cy="12" r="1.700" /></svg>
      </div>
      <div className="flex h-[26px] shrink-0 items-center border-b border-[#c9c7c4] pb-[5px] pl-[11px]">
        <svg className="mt-px" width="13" height="13"><path d="M0 0h3v3H0zM5 0h3v3H5zM10 0h3v3h-3z" fill="#f23a30" /><path d="M0 5h3v3H0zM0 10h3v3H0z" fill="#23a05a" /><path d="M5 5h3v3H5z" fill="#2f7df0" /><path d="M10 5h3v3h-3zM5 10h3v3H5zM10 10h3v3h-3z" fill="#f5b02e" /></svg>
        <Fit className="ml-[10px] w-[34px]">Apps</Fit>
        <svg className="mt-[2px] ml-[14px]" width="14" height="12"><path d="M0 0h14v12H0z" fill="#eee" /><path d="M1.300 12V1.500L7 6.500l5.700-5V12" fill="none" stroke="#d5372c" strokeWidth="2.500" /></svg>
        <span className="ml-[9px] w-[113px] overflow-hidden mask-r-from-75%"><Fit className="w-[113px]">Inbox (781) - andr</Fit></span>
        <span className="mt-px ml-[14px]"><Folder /></span><Fit className="ml-[9px] w-[30px]">cs50</Fit>
        <span className="mt-px ml-[13px]"><Folder /></span><Fit className="ml-[9px] w-[46px]">coding</Fit>
        <span className="mt-px ml-[14px]"><Folder /></span><Fit className="ml-[9px] w-[93px]">LearningFuze</Fit>
        <span className="mt-px ml-[12px]"><CheckIcon /></span><span className="ml-[8px] w-[113px] overflow-hidden mask-r-from-75%"><Fit className="w-[113px]">Dashboard | Meis</Fit></span>
        <span className="mt-px ml-[14px]"><Folder /></span><Fit className="ml-[9px] w-[49px]">SBMTV</Fit>
        <span className="mt-px ml-[13px]"><Folder /></span><Fit className="ml-[9px] w-[89px]">FunActivities</Fit>
      </div>
      <main className="flex flex-1 flex-col items-center bg-[linear-gradient(to_right,#42afbf,#00bfb6)] pt-[81px]">
        <Calculator />
        <div className="mt-[56px] flex flex-col items-center font-['Roboto'] leading-none font-black text-[#333]">
          <Fit className="w-[102px] text-[9px]">DESIGNED AND CODED BY</Fit>
          <div className="mt-[9px] flex items-center text-[13.500px]"><span className="w-[13px] font-medium">©</span><Fit className="w-[93px] text-[#555]">ANDREA WAYTE</Fit><Fit className="ml-[4px] w-[35px]">| 2017</Fit></div>
        </div>
      </main>
    </section>
  );
}

export default function App() {
  return (
    <div className="relative h-[1080px] w-[1920px] overflow-hidden bg-[#394345] font-['Noto_Sans',sans-serif]">
      <GimpMain />
      <div className="absolute top-[198px] left-[1764px] h-[517px] w-[200px] rounded-tl-[6px] shadow-[0_5px_22px_rgba(0,0,0,.4)]" />
      <LayersWindow />
      <ToolOptions />
      <Chromium />
      <Launcher />
      <TopBar />
    </div>
  );
}
